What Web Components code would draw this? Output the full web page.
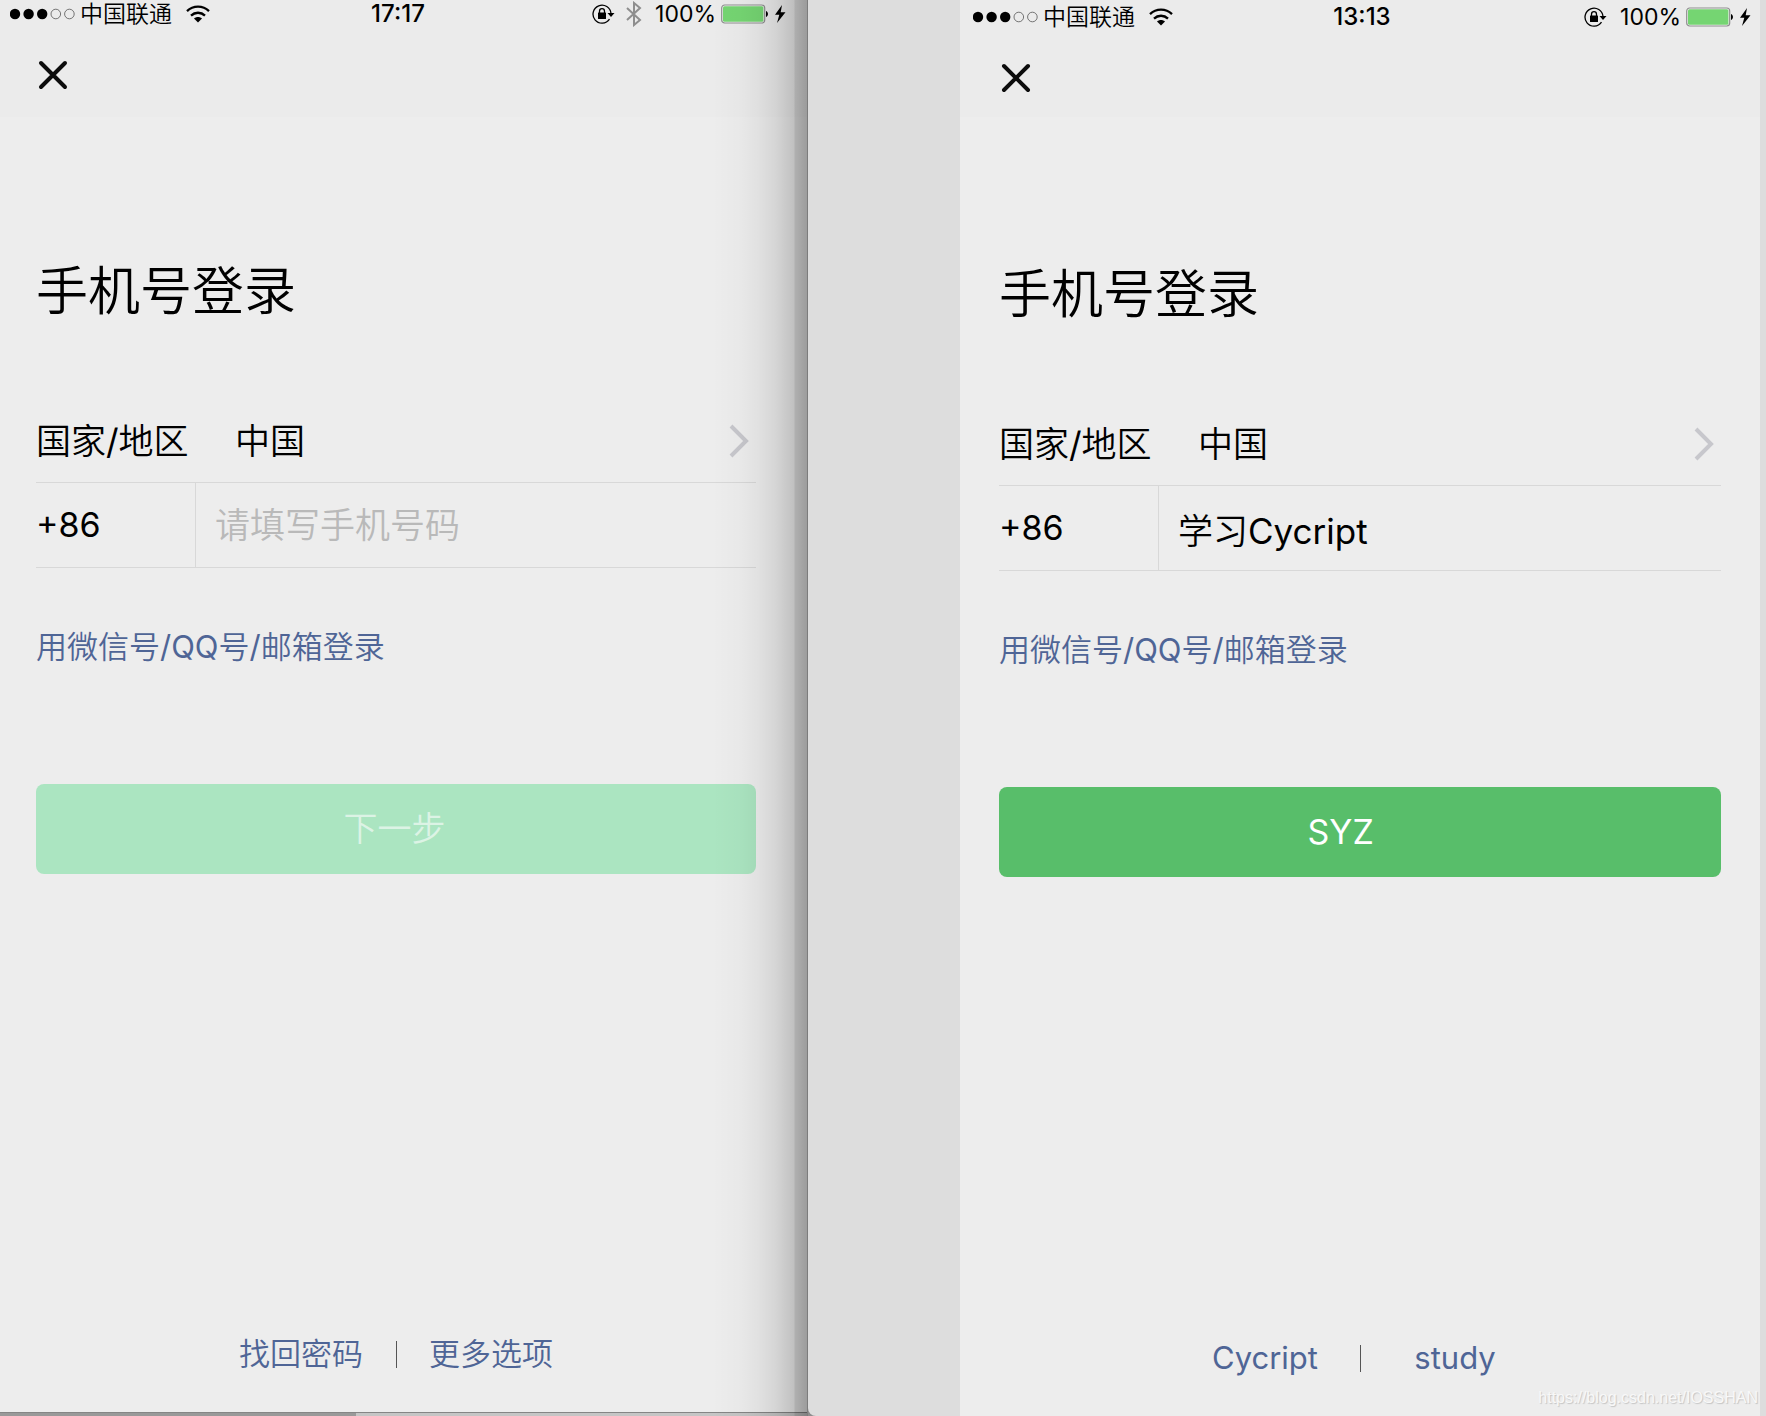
<!DOCTYPE html>
<html lang="zh-CN">
<head>
<meta charset="utf-8">
<title>手机号登录</title>
<style>
  html, body { height: 100%; margin: 0; }
  body {
    background: #8d8d8d;
    color: #000;
    font-family: Inter, "Noto Sans CJK SC DemiLight", "Noto Sans CJK SC", sans-serif;
    font-weight: 400;
  }
</style>
</head>
<body>
<login-desk>
  <mirror-window slot="back">
    <phone-screen>
      <status-bar carrier="中国联通" time="17:17" battery="100%" bluetooth></status-bar>
      <login-form country="中国" code="+86" placeholder="请填写手机号码" action="下一步" disabled></login-form>
      <footer-links>
        <a href="#find">找回密码</a>
        <a href="#more" slot="end">更多选项</a>
      </footer-links>
    </phone-screen>
  </mirror-window>
  <mirror-window slot="front" front>
    <phone-screen>
      <status-bar carrier="中国联通" time="13:13" battery="100%"></status-bar>
      <login-form country="中国" code="+86" placeholder="请填写手机号码" value="学习Cycript" action="SYZ"></login-form>
      <footer-links>
        <a href="#find">Cycript</a>
        <a href="#more" slot="end">study</a>
      </footer-links>
    </phone-screen>
  </mirror-window>
  <span slot="mark">https://blog.csdn.net/IOSSHAN</span>
</login-desk>

<script>
// base class: puts the markup in an open shadow root
class BaseElement extends HTMLElement {
  connectedCallback() {
    if (this.shadowRoot) return;
    const template = document.createElement('template');
    template.innerHTML = this.render();
    this.attachShadow({ mode: 'open' });
    this.shadowRoot.appendChild(template.content.cloneNode(true));
  }

  attr(name) {
    return this.getAttribute(name) || '';
  }
}

// the two windows side by side, and the watermark over them
class LoginDesk extends BaseElement {
  render() {
    return `
      <style>
        :host {
          display: grid;
          grid-template-columns: 808fr 958fr;
          min-height: 100vh;
          position: relative;
        }
        ::slotted([slot="mark"]) {
          position: absolute;
          right: 8px;
          bottom: 8px;
          color: #f8f8f8;
          font: 16px/20px "Liberation Sans", sans-serif;
          text-shadow: 1px 1px 1px #c4c4c4;
        }
      </style>
      <slot name="back"></slot>
      <slot name="front"></slot>
      <slot name="mark"></slot>
    `;
  }
}

class MirrorWindow extends BaseElement {
  render() {
    return `
      <style>
        :host {
          display: flex;
          flex-direction: column;
          min-width: 0;
          position: relative;
          background: #ededed;
        }
        .screen {
          flex: 1;
          display: flex;
          padding-right: 16px;
          background: linear-gradient(#ebebeb 117px, #ededed 117px);
        }
        .edge {
          height: 3px;
          border-top: 1px solid #858585;
          background: linear-gradient(90deg, #999 44%, #c5c5c5 44%);
        }
        /* shadow that the front window casts on this one */
        .shade {
          position: absolute;
          top: 0;
          right: 0;
          bottom: 0;
          width: 96px;
          pointer-events: none;
          border-right: 1px solid #7c7c7c;
          box-sizing: border-box;
          background: linear-gradient(90deg,
            rgba(0, 0, 0, 0) 0,
            rgba(0, 0, 0, 0.02) 28px,
            rgba(0, 0, 0, 0.05) 46px,
            rgba(0, 0, 0, 0.1) 64px,
            rgba(0, 0, 0, 0.19) 82px,
            rgba(0, 0, 0, 0.26) 83px,
            rgba(0, 0, 0, 0.34) 95px);
        }
        :host([front]) {
          background: #ddd;
          border-bottom-left-radius: 8px;
        }
        :host([front]) .screen {
          margin: 0 6px 0 152px;
          padding: 3px 3px 0;
        }
        :host([front]) .edge,
        :host([front]) .shade { display: none; }
      </style>
      <div class="screen"><slot></slot></div>
      <div class="edge"></div>
      <div class="shade"></div>
    `;
  }
}

class PhoneScreen extends BaseElement {
  render() {
    return `
      <style>
        :host {
          flex: 1;
          min-width: 0;
          display: flex;
          flex-direction: column;
        }
      </style>
      <slot></slot>
    `;
  }
}

class StatusBar extends BaseElement {
  render() {
    const bluetooth = this.hasAttribute('bluetooth') ? `
      <svg class="bt" width="16" height="26" viewBox="0 0 16 26" fill="none" stroke="#8e8e8e" stroke-width="2">
        <path d="M1 7l13 12-6 5V2l6 5L1 19"/>
      </svg>` : '';
    return `
      <style>
        :host {
          display: grid;
          grid-template-columns: 1fr auto 1fr;
          align-items: center;
          height: 27px;
          padding: 0 6px 0 10px;
          font-size: 23px;
          line-height: 26px;
          white-space: nowrap;
        }
        div { display: flex; align-items: center; }
        .right { justify-content: flex-end; }
        .wifi { margin-left: 14px; }
        .signal { margin-right: 5px; }
        .bt { margin-left: 11px; }
        .level { margin: 0 5px 0 13px; }
        time { font-size: 24px; font-weight: 500; }
        svg { flex: none; }
      </style>
      <div>
        <svg class="signal" width="65" height="12" viewBox="0 0 65 12">
          <circle cx="5" cy="6" r="5.2"/><circle cx="18.6" cy="6" r="5.2"/><circle cx="32.2" cy="6" r="5.2"/>
          <g fill="none" stroke="#555" stroke-width=".8"><circle cx="45.8" cy="6" r="4.8"/><circle cx="59.4" cy="6" r="4.8"/></g>
        </svg>
        <span>${this.attr('carrier')}</span>
        <svg class="wifi" width="24" height="18" viewBox="0 0 24 18" fill="none" stroke="#000" stroke-width="2.3">
          <path d="M1 6.2C7.2 .2 16.8 .2 23 6.2M5 10.6c4-3.8 10-3.8 14 0"/>
          <path d="M12 17.5l-4-4c2.300-2 5.700-2 8 0z" fill="#000" stroke="none"/>
        </svg>
      </div>
      <time>${this.attr('time')}</time>
      <div class="right">
        <svg width="23" height="20" viewBox="0 0 23 20">
          <path d="M17.500 15.200A9 9 0 1 1 19 9.500" fill="none" stroke="#000" stroke-width="1.300"/>
          <path d="M15.500 9h7L19 13z"/>
          <rect x="6" y="8.500" width="8" height="6.500" rx=".5"/>
          <path d="M7.500 9V7.200a2.500 2.500 0 0 1 5 0V9" fill="none" stroke="#000" stroke-width="1.300"/>
        </svg>
        ${bluetooth}
        <span class="level">${this.attr('battery')}</span>
        <svg width="65" height="20" viewBox="0 0 65 20">
          <rect x=".7" y="1" width="43" height="18" rx="3" fill="#f2f2f2" stroke="#8e8e8e" stroke-width="1.200"/>
          <rect x="2" y="2.300" width="40.400" height="15.400" rx="1.500" fill="#75d572"/>
          <path d="M45 7c2.600.8 2.600 5.200 0 6z"/>
          <path d="M61 1l-7 9.800h4.300L56 19l8.500-10.800h-4.800z"/>
        </svg>
      </div>
    `;
  }
}

class LoginForm extends BaseElement {
  render() {
    const disabled = this.hasAttribute('disabled') ? 'disabled' : '';
    return `
      <style>
        :host { display: block; }
        button, input { font: inherit; color: inherit; }
        svg { display: block; flex: none; }
        .close {
          display: block;
          margin: 27px 0 0 32px;
          padding: 5px;
          border: 0;
          background: none;
        }
        form { padding: 0 36px; }
        h1 {
          margin: 158px 0 0;
          font-size: 52px;
          font-weight: inherit;
          line-height: 76px;
        }
        .country {
          display: flex;
          align-items: center;
          width: 100%;
          height: 84px;
          margin-top: 69px;
          padding: 0 7px 0 0;
          border: 0;
          border-bottom: 1px solid #d8d8d8;
          background: none;
          font-size: 35px;
          line-height: 50px;
          text-align: left;
        }
        .name { width: 199px; }
        .place { flex: 1; }
        .phone {
          display: flex;
          align-items: center;
          height: 84px;
          border-bottom: 1px solid #d8d8d8;
          font-size: 34px;
        }
        label {
          width: 159px;
          border-right: 1px solid #d8d8d8;
          line-height: 84px;
        }
        input {
          flex: 1;
          min-width: 0;
          height: 84px;
          padding: 0 0 0 19px;
          border: 0;
          outline: 0;
          background: none;
          font-size: 35px;
          line-height: 50px;
          box-sizing: border-box;
        }
        input::placeholder { color: #b9b9b9; opacity: 1; }
        .other {
          display: block;
          margin-top: 56px;
          color: #4f6596;
          font-size: 31px;
          line-height: 46px;
          text-decoration: none;
        }
        .next {
          display: flex;
          justify-content: center;
          align-items: center;
          width: 100%;
          height: 90px;
          margin-top: 114px;
          padding: 0;
          border: 0;
          border-radius: 8px;
          background: #58be6a;
          color: #fff;
          font-size: 34px;
          line-height: 50px;
        }
        .next span { min-width: 105px; text-align: left; }
        .next:disabled { background: #abe5c1; color: #dcf3e5; }
      </style>
      <button class="close" type="button" aria-label="关闭">
        <svg width="32" height="32" viewBox="0 0 32 32" stroke="#0c0c0c" stroke-width="4" stroke-linecap="round">
          <path d="M4 4l24 24M28 4L4 28"/>
        </svg>
      </button>
      <form>
        <h1>手机号登录</h1>
        <button class="country" type="button">
          <span class="name">国家/地区</span>
          <span class="place">${this.attr('country')}</span>
          <svg width="20" height="34" viewBox="0 0 20 34" fill="none" stroke="#c7c7cc" stroke-width="4">
            <path d="M2 2l15 15L2 32"/>
          </svg>
        </button>
        <div class="phone">
          <label for="phone">${this.attr('code')}</label>
          <input id="phone" type="text" placeholder="${this.attr('placeholder')}" value="${this.attr('value')}">
        </div>
        <a class="other" href="#account">用微信号/QQ号/邮箱登录</a>
        <button class="next" type="button" ${disabled}><span>${this.attr('action')}</span></button>
      </form>
    `;
  }
}

class FooterLinks extends BaseElement {
  render() {
    return `
      <style>
        :host {
          display: flex;
          justify-content: center;
          align-items: center;
          gap: 32px;
          margin-top: auto;
          padding-bottom: 35px;
          font-size: 31px;
          line-height: 46px;
        }
        ::slotted(a) {
          min-width: 125px;
          color: #4f6596;
          text-align: center;
          text-decoration: none;
        }
        i { width: 1px; height: 27px; background: #555; }
      </style>
      <slot></slot>
      <i></i>
      <slot name="end"></slot>
    `;
  }
}

customElements.define('login-desk', LoginDesk);
customElements.define('mirror-window', MirrorWindow);
customElements.define('phone-screen', PhoneScreen);
customElements.define('status-bar', StatusBar);
customElements.define('login-form', LoginForm);
customElements.define('footer-links', FooterLinks);
</script>
</body>
</html>
